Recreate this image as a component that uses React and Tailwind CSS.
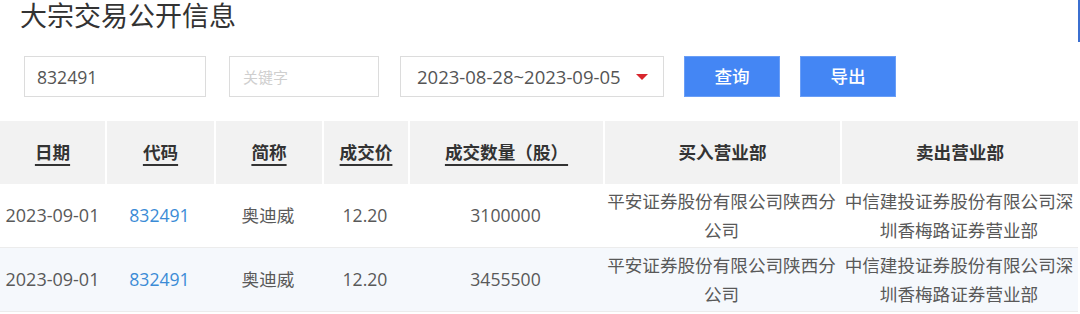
const cols = ['105px', '109px', '108px', '86px', '195px', '237px', '238px'];

const rows = [
  {
    date: '2023-09-01',
    code: '832491',
    name: '奥迪威',
    price: '12.20',
    volume: '3100000',
    buyer: '平安证券股份有限公司陕西分公司',
    seller: '中信建投证券股份有限公司深圳香梅路证券营业部',
  },
  {
    date: '2023-09-01',
    code: '832491',
    name: '奥迪威',
    price: '12.20',
    volume: '3455500',
    buyer: '平安证券股份有限公司陕西分公司',
    seller: '中信建投证券股份有限公司深圳香梅路证券营业部',
  },
];

const headers = [
  { label: '日期', sort: true },
  { label: '代码', sort: true },
  { label: '简称', sort: true },
  { label: '成交价', sort: true },
  { label: '成交数量（股）', sort: true },
  { label: '买入营业部', sort: false },
  { label: '卖出营业部', sort: false },
];

export default function App() {
  return (
    <div
      className="flex w-[1080px] h-[314px] overflow-hidden bg-white text-[17.6px] text-[#595959]"
      style={{ fontFamily: '"Open Sans", "Noto Sans CJK SC", sans-serif' }}
    >
      <div className="w-[1078px] flex flex-col">
        <h1 className="h-[32px] pl-[20px] text-[27px] leading-[32px] font-normal text-[#333]">
          大宗交易公开信息
        </h1>

        <div className="mt-[24px] flex items-center h-[41px] pl-[24px]">
          <input
            defaultValue="832491"
            className="w-[182px] h-[41px] border border-[#dcdcdc] pl-[12px] text-[#555] outline-none"
          />
          <input
            placeholder="关键字"
            className="ml-[23px] w-[150px] h-[41px] border border-[#dcdcdc] pl-[13px] text-[15px] placeholder:text-[#cfcfcf] outline-none"
          />
          <div className="ml-[21px] w-[264px] h-[41px] border border-[#dcdcdc] flex items-center pl-[16px] text-[18.5px] text-[#555]">
            <span>2023-08-28~2023-09-05</span>
            <svg className="ml-auto mr-[15px]" width="12" height="6" viewBox="0 0 12 6">
              <path d="M0 0h12L6 6z" fill="#d8262d" />
            </svg>
          </div>
          <button className="ml-[20px] w-[96px] h-[41px] bg-[#4486f4] border border-[#6a9ef6] text-white font-medium">
            查询
          </button>
          <button className="ml-[20px] w-[96px] h-[41px] bg-[#4486f4] border border-[#6a9ef6] text-white font-medium">
            导出
          </button>
        </div>

        <div className="mt-[24px]">
          <div
            className="grid h-[63px] bg-[#f2f2f2]"
            style={{ gridTemplateColumns: cols.join(' ') }}
          >
            {headers.map((h, i) => (
              <div
                key={h.label}
                className={
                  'flex items-center justify-center font-bold text-[#333] ' +
                  (i > 0 ? 'border-l-2 border-white' : '')
                }
              >
                <span className={h.sort ? 'underline underline-offset-[5px] decoration-[1.5px]' : ''}>
                  {h.label}
                </span>
              </div>
            ))}
          </div>

          {rows.map((r, idx) => (
            <div
              key={idx}
              className={
                'grid h-[64px] border-b border-[#ececec] ' +
                (idx % 2 === 1 ? 'bg-[#f5f8fc]' : 'bg-white')
              }
              style={{ gridTemplateColumns: cols.join(' ') }}
            >
              <div className="flex items-center justify-center text-[18px]">{r.date}</div>
              <div className="flex items-center justify-center text-[#3b8bd6]">{r.code}</div>
              <div className="flex items-center justify-center">{r.name}</div>
              <div className="flex items-center justify-center">{r.price}</div>
              <div className="flex items-center justify-center">{r.volume}</div>
              <div className="flex items-center justify-center px-[3px] text-center leading-[29px]">
                {r.buyer}
              </div>
              <div className="flex items-center justify-center px-[3px] text-center leading-[29px]">
                {r.seller}
              </div>
            </div>
          ))}
        </div>
      </div>
      <div className="w-[2px] flex flex-col">
        <div className="h-[42px] bg-[#3b6fd0]" />
      </div>
    </div>
  );
}
